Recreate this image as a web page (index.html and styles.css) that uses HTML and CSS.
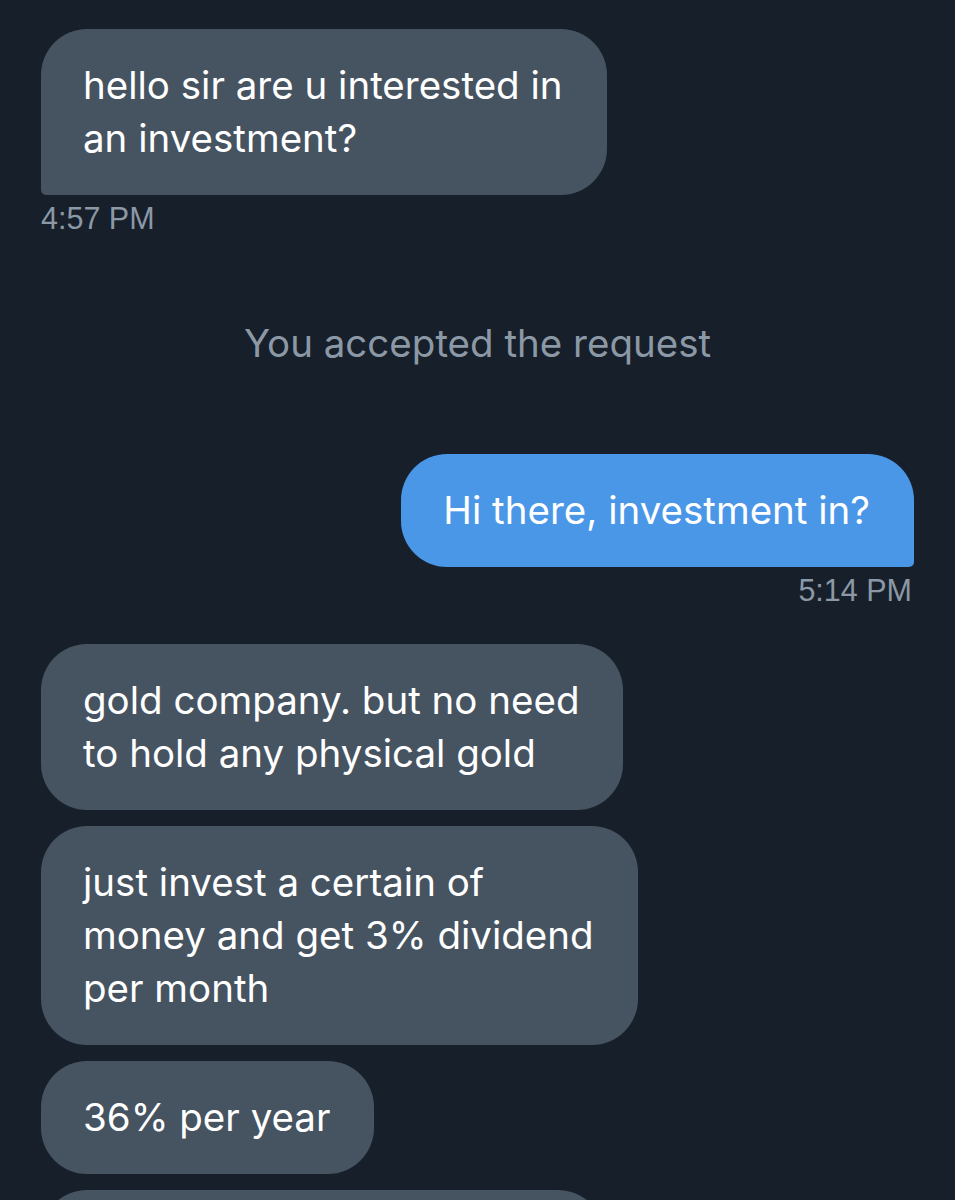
FILE: index.html
```html
<!DOCTYPE html>
<html lang="en">

<head>
  <meta charset="UTF-8">
  <meta name="viewport" content="width=device-width, initial-scale=1.0">
  <title>Messages</title>

  <link rel="stylesheet" href="styles.css">
</head>

<body>
  <div class="chat">
    <div class="bubble received last">hello sir are u interested in<br>an investment?</div>
    <div class="time">4:57 PM</div>

    <div class="notice">You accepted the request</div>

    <div class="bubble sent last">Hi there, investment in?</div>
    <div class="time right">5:14 PM</div>

    <div class="bubble received first">gold company. but no need<br>to hold any physical gold</div>
    <div class="bubble received">just invest a certain of<br>money and get 3% dividend<br>per month</div>
    <div class="bubble received">36% per year</div>
    <div class="bubble received">you can withdraw anytime</div>
  </div>
</body>

</html>
```

FILE: styles.css
```css
body {
  margin: 0;
  background-color: #171f2a;
  font-family: 'Inter', 'Noto Sans', sans-serif;
  color: #fff;
  overflow: hidden;
}

.chat {
  display: flex;
  flex-direction: column;
  padding: 29px 41px 0;
}

.bubble {
  width: fit-content;
  padding: 30px 44px 30px 42px;
  font-size: 38.5px;
  line-height: 53px;
  border-radius: 46px;
  margin-top: 16px;
}

.bubble:first-child {
  margin-top: 0;
}

.bubble.first {
  margin-top: 36px;
}

.received {
  align-self: flex-start;
  background-color: #465361;
}

.sent {
  align-self: flex-end;
  background-color: #4a97e8;
  margin-top: 87px;
}

.received.last {
  border-bottom-left-radius: 5px;
}

.sent.last {
  border-bottom-right-radius: 5px;
}

.time {
  margin-top: 5px;
  font-family: 'Liberation Sans', Arial, sans-serif;
  font-size: 30.5px;
  line-height: 36px;
  color: #8b98a5;
}

.time.right {
  align-self: flex-end;
  margin-right: 2px;
}

.notice {
  margin-top: 83px;
  text-align: center;
  font-size: 38.5px;
  line-height: 48px;
  color: #8b98a5;
}
```
